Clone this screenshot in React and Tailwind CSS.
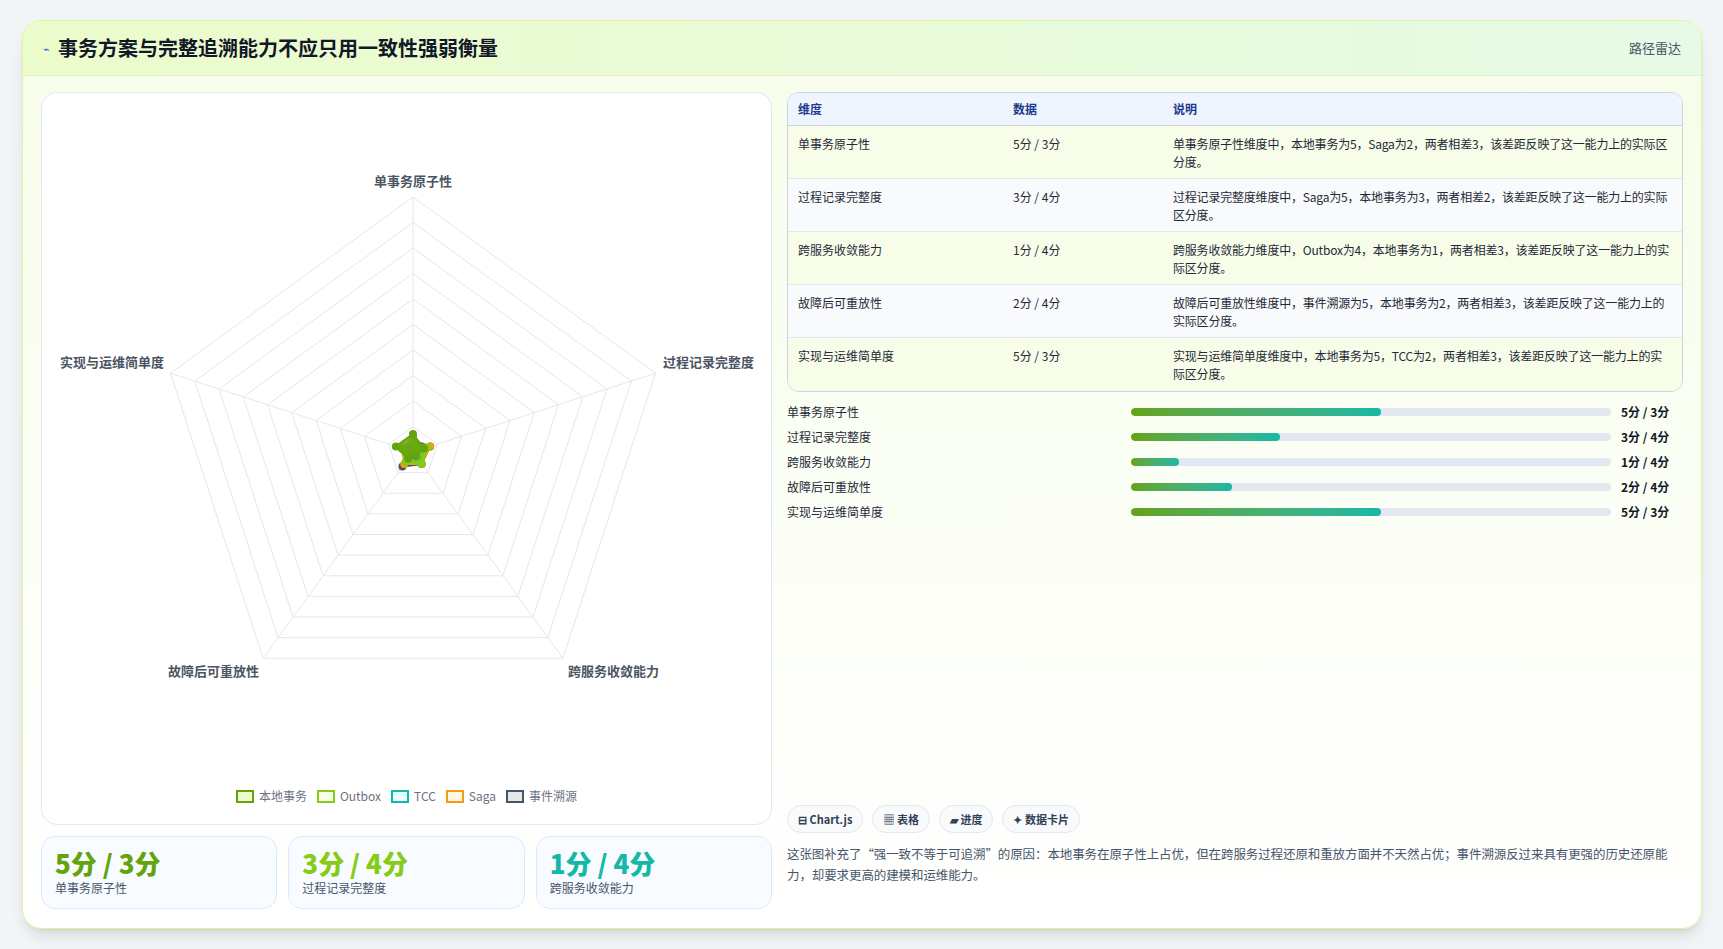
import React from "react";

const dims = ["单事务原子性", "过程记录完整度", "跨服务收敛能力", "故障后可重放性", "实现与运维简单度"];
const rows = [
  ["单事务原子性", "5分 / 3分", "单事务原子性维度中，本地事务为5，Saga为2，两者相差3，该差距反映了这一能力上的实际区分度。"],
  ["过程记录完整度", "3分 / 4分", "过程记录完整度维度中，Saga为5，本地事务为3，两者相差2，该差距反映了这一能力上的实际区分度。"],
  ["跨服务收敛能力", "1分 / 4分", "跨服务收敛能力维度中，Outbox为4，本地事务为1，两者相差3，该差距反映了这一能力上的实际区分度。"],
  ["故障后可重放性", "2分 / 4分", "故障后可重放性维度中，事件溯源为5，本地事务为2，两者相差3，该差距反映了这一能力上的实际区分度。"],
  ["实现与运维简单度", "5分 / 3分", "实现与运维简单度维度中，本地事务为5，TCC为2，两者相差3，该差距反映了这一能力上的实际区分度。"],
];
const bars = [52, 31, 10, 21, 52];

const F = { fontFamily: '"Noto Sans CJK SC", "Noto Sans", sans-serif' };

function Radar() {
  const cx = 371, cy = 351, R = 255;
  const pt = (i, r) => {
    const a = -Math.PI / 2 + (i * 2 * Math.PI) / 5;
    return [cx + r * Math.cos(a), cy + r * Math.sin(a)];
  };
  const poly = (r) => [0, 1, 2, 3, 4].map((i) => pt(i, r).join(",")).join(" ");
  const series = [
    { c: "#65a30d", f: "rgba(101,163,13,0.85)", v: [5, 3, 1, 2, 5] },
    { c: "#84cc16", f: "rgba(132,204,22,0.7)", v: [3, 4, 4, 3, 3] },
    { c: "#14b8a6", f: "rgba(20,184,166,0.5)", v: [4, 3, 3, 3, 2] },
    { c: "#f59e0b", f: "rgba(245,158,11,0.5)", v: [2, 5, 4, 4, 3] },
    { c: "#475569", f: "rgba(71,85,105,0.5)", v: [3, 5, 4, 5, 1] },
  ];
  const labels = [
    [371, 85, "middle"], [621, 266, "start"], [526, 575, "start"], [217, 575, "end"], [122, 266, "end"],
  ];
  return (
    <svg width="730" height="640" viewBox="0 0 730 640">
      {[1, 2, 3, 4, 5, 6, 7, 8, 9, 10].map((k) => (
        <polygon key={k} points={poly((R * k) / 10)} fill="none" stroke="#e5e7eb" strokeWidth="1" />
      ))}
      {[0, 1, 2, 3, 4].map((i) => {
        const [x, y] = pt(i, R);
        return <line key={i} x1={cx} y1={cy} x2={x} y2={y} stroke="#e5e7eb" />;
      })}
      {series.slice().reverse().map((s, si) => {
        const p = s.v.map((v, i) => pt(i, v * 3.2 + 2));
        return (
          <g key={si}>
            <polygon points={p.map((q) => q.join(",")).join(" ")} fill={s.f} stroke={s.c} strokeWidth="2" />
            {p.map((q, i) => <circle key={i} cx={q[0]} cy={q[1]} r="4" fill={s.c} />)}
          </g>
        );
      })}
      {dims.map((d, i) => (
        <text key={i} x={labels[i][0]} y={labels[i][1]} textAnchor={labels[i][2]}
          fontSize="13" fontWeight="700" fill="#4b5563" style={F}>{d}</text>
      ))}
    </svg>
  );
}

export default function App() {
  return (
    <div className="w-[1723px] h-[949px] bg-[#f3f4f6] pt-[20px] pl-[22px]" style={F}>
      <div className="w-[1680px] h-[909px] rounded-[20px] border border-[#d9f99d] bg-gradient-to-b from-[#f7fde9] to-white shadow-lg overflow-hidden flex flex-col">
        <div className="h-[55px] flex items-center justify-between px-[20px] bg-gradient-to-r from-[#ecfccb] to-[#e6fae6] border-b border-[#e2f0d0]">
          <div className="flex items-center gap-2">
            <span className="text-[11px] text-[#2563eb]">⌁</span>
            <span className="text-[20px] font-bold text-[#111827]">事务方案与完整追溯能力不应只用一致性强弱衡量</span>
          </div>
          <span className="text-[13px] text-[#475569]">路径雷达</span>
        </div>
        <div className="flex gap-[15px] px-[18px] pt-[16px]">
          <div className="w-[731px] flex flex-col gap-[11px]">
            <div className="h-[733px] rounded-[16px] border border-[#e2e8f0] bg-white flex flex-col items-center">
              <div className="mt-[8px]"><Radar /></div>
              <div className="flex items-center gap-[10px] text-[12px] text-[#6b7280] mt-[46px]">
                {[["本地事务", "#65a30d", "#ecfccb"], ["Outbox", "#84cc16", "#f7fee7"], ["TCC", "#14b8a6", "#e6fffb"], ["Saga", "#f59e0b", "#fff7e6"], ["事件溯源", "#475569", "#e5e7eb"]].map(([n, c, b]) => (
                  <div key={n} className="flex items-center gap-[5px]">
                    <span className="w-[18px] h-[13px] border-[2px]" style={{ borderColor: c, background: b }} />
                    <span>{n}</span>
                  </div>
                ))}
              </div>
            </div>
            <div className="grid grid-cols-3 gap-[11px]">
              {[["5分 / 3分", "text-[#65a30d]", "单事务原子性"], ["3分 / 4分", "text-[#84cc16]", "过程记录完整度"], ["1分 / 4分", "text-[#14b8a6]", "跨服务收敛能力"]].map(([v, c, l]) => (
                <div key={l} className="h-[73px] rounded-[14px] border border-[#dbeafe] bg-[#f8fbff] px-[13px] pt-[10px]">
                  <div className={`text-[26px] font-extrabold leading-[32px] ${c}`}>{v}</div>
                  <div className="text-[12px] text-[#475569]">{l}</div>
                </div>
              ))}
            </div>
          </div>
          <div className="w-[897px] flex flex-col">
            <div className="rounded-[12px] border border-[#cbd5e1] overflow-hidden">
              <div className="grid grid-cols-[215px_160px_1fr] h-[33px] items-center bg-[#eef5ff] px-[10px] text-[12px] font-bold text-[#1e3a8a] border-b border-[#cbd5e1]">
                <span>维度</span><span>数据</span><span>说明</span>
              </div>
              {rows.map((r, i) => (
                <div key={i} className={`grid grid-cols-[215px_160px_1fr] h-[53px] pt-[9px] px-[10px] text-[12px] text-[#1f2937] leading-[18px] ${i < 4 ? "border-b border-[#e2e8f0]" : ""} ${i % 2 ? "bg-[#f8fafc]" : "bg-[#f7fde9]"}`}>
                  <span>{r[0]}</span><span>{r[1]}</span><span className="tracking-[-0.2px]">{r[2]}</span>
                </div>
              ))}
            </div>
            <div className="flex flex-col gap-[8px] mt-[11px]">
              {rows.map((r, i) => (
                <div key={i} className="flex items-center h-[17px] text-[12px]">
                  <span className="w-[344px] text-[#1f2937]">{r[0]}</span>
                  <div className="w-[480px] h-[8px] rounded-full bg-[#e2e8f0] overflow-hidden">
                    <div className="h-full rounded-full bg-gradient-to-r from-[#65a30d] to-[#14b8a6]" style={{ width: `${bars[i]}%` }} />
                  </div>
                  <span className="ml-[10px] font-bold text-[#111827]">{r[1]}</span>
                </div>
              ))}
            </div>
            <div className="flex gap-[9px] mt-[285px]">
              {["⊟ Chart.js", "▦ 表格", "▰ 进度", "✦ 数据卡片"].map((t) => (
                <span key={t} className="h-[28px] px-[10px] rounded-full border border-[#e2e8f0] bg-[#f8fafc] text-[11px] font-bold text-[#334155] flex items-center">{t}</span>
              ))}
            </div>
            <p className="mt-[10px] text-[12.5px] leading-[21px] text-[#475569] tracking-[-0.1px]">
              这张图补充了“强一致不等于可追溯”的原因：本地事务在原子性上占优，但在跨服务过程还原和重放方面并不天然占优；事件溯源反过来具有更强的历史还原能力，却要求更高的建模和运维能力。
            </p>
          </div>
        </div>
      </div>
    </div>
  );
}
